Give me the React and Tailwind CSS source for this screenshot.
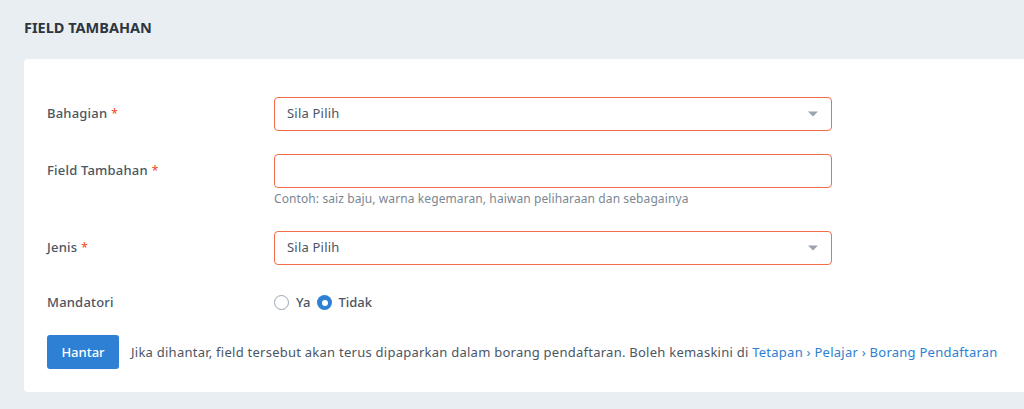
import React from "react";

const font = { fontFamily: '"Noto Sans", "Open Sans", sans-serif' };

function Label({ children, required }) {
  return (
    <div className="w-[227px] shrink-0 text-[13px] font-medium tracking-[0.2px] text-[#4b5563]">
      {children}
      {required && <span className="ml-1 text-[12px] text-[#f0532e]">*</span>}
    </div>
  );
}

function SelectBox() {
  return (
    <div className="flex h-[34px] w-[558px] items-center justify-between rounded-[4px] border border-[#f46d4a] bg-white pl-[12px] pr-[12px]">
      <span className="text-[13px] tracking-[0.2px] text-[#4b5563]">Sila Pilih</span>
      <svg width="12" height="6" viewBox="0 0 12 6">
        <path d="M1 0.5 L11 0.5 L6 5.5 Z" fill="#9ca3af" />
      </svg>
    </div>
  );
}

export default function App() {
  return (
    <div className="h-[409px] w-full overflow-hidden bg-[#e8eef2]" style={font}>
      <div className="px-[24px] pt-[17px]">
        <h1 className="text-[14.5px] font-bold text-[#2d3640]">FIELD TAMBAHAN</h1>

        <div className="mr-[-40px] mt-[20px] rounded-[4px] bg-white px-[23px] pb-[23px] pt-[38px]">
          <div className="flex items-center">
            <Label required>Bahagian</Label>
            <SelectBox />
          </div>

          <div className="mt-[23px] flex">
            <div className="flex h-[34px] items-center">
              <Label required>Field Tambahan</Label>
            </div>
            <div>
              <div className="h-[34px] w-[558px] rounded-[4px] border border-[#f46d4a] bg-white" />
              <p className="mt-[2px] text-[12px] tracking-[0.1px] text-[#7b8794]">
                Contoh: saiz baju, warna kegemaran, haiwan peliharaan dan sebagainya
              </p>
            </div>
          </div>

          <div className="mt-[23px] flex items-center">
            <Label required>Jenis</Label>
            <SelectBox />
          </div>

          <div className="mt-[28px] flex items-center">
            <Label>Mandatori</Label>
            <div className="flex items-center text-[13px] font-medium text-[#4b5563]">
              <span className="h-[15px] w-[15px] rounded-full border border-[#9aa5b4]" />
              <span className="ml-[7px]">Ya</span>
              <span className="ml-[7px] flex h-[15px] w-[15px] items-center justify-center rounded-full bg-[#2d80d4]">
                <span className="h-[6px] w-[6px] rounded-full bg-white" />
              </span>
              <span className="ml-[6px]">Tidak</span>
            </div>
          </div>

          <div className="mt-[23px] flex items-center">
            <button className="h-[34px] w-[72px] rounded-[3px] bg-[#2d80d4] text-[13px] font-medium text-white">
              Hantar
            </button>
            <p className="ml-[12px] text-[13px] tracking-[0.25px] text-[#4b5563]">
              Jika dihantar, field tersebut akan terus dipaparkan dalam borang pendaftaran. Boleh kemaskini di{" "}
              <a className="text-[#2d80d4]">Tetapan › Pelajar › Borang Pendaftaran</a>
            </p>
          </div>
        </div>
      </div>
    </div>
  );
}
